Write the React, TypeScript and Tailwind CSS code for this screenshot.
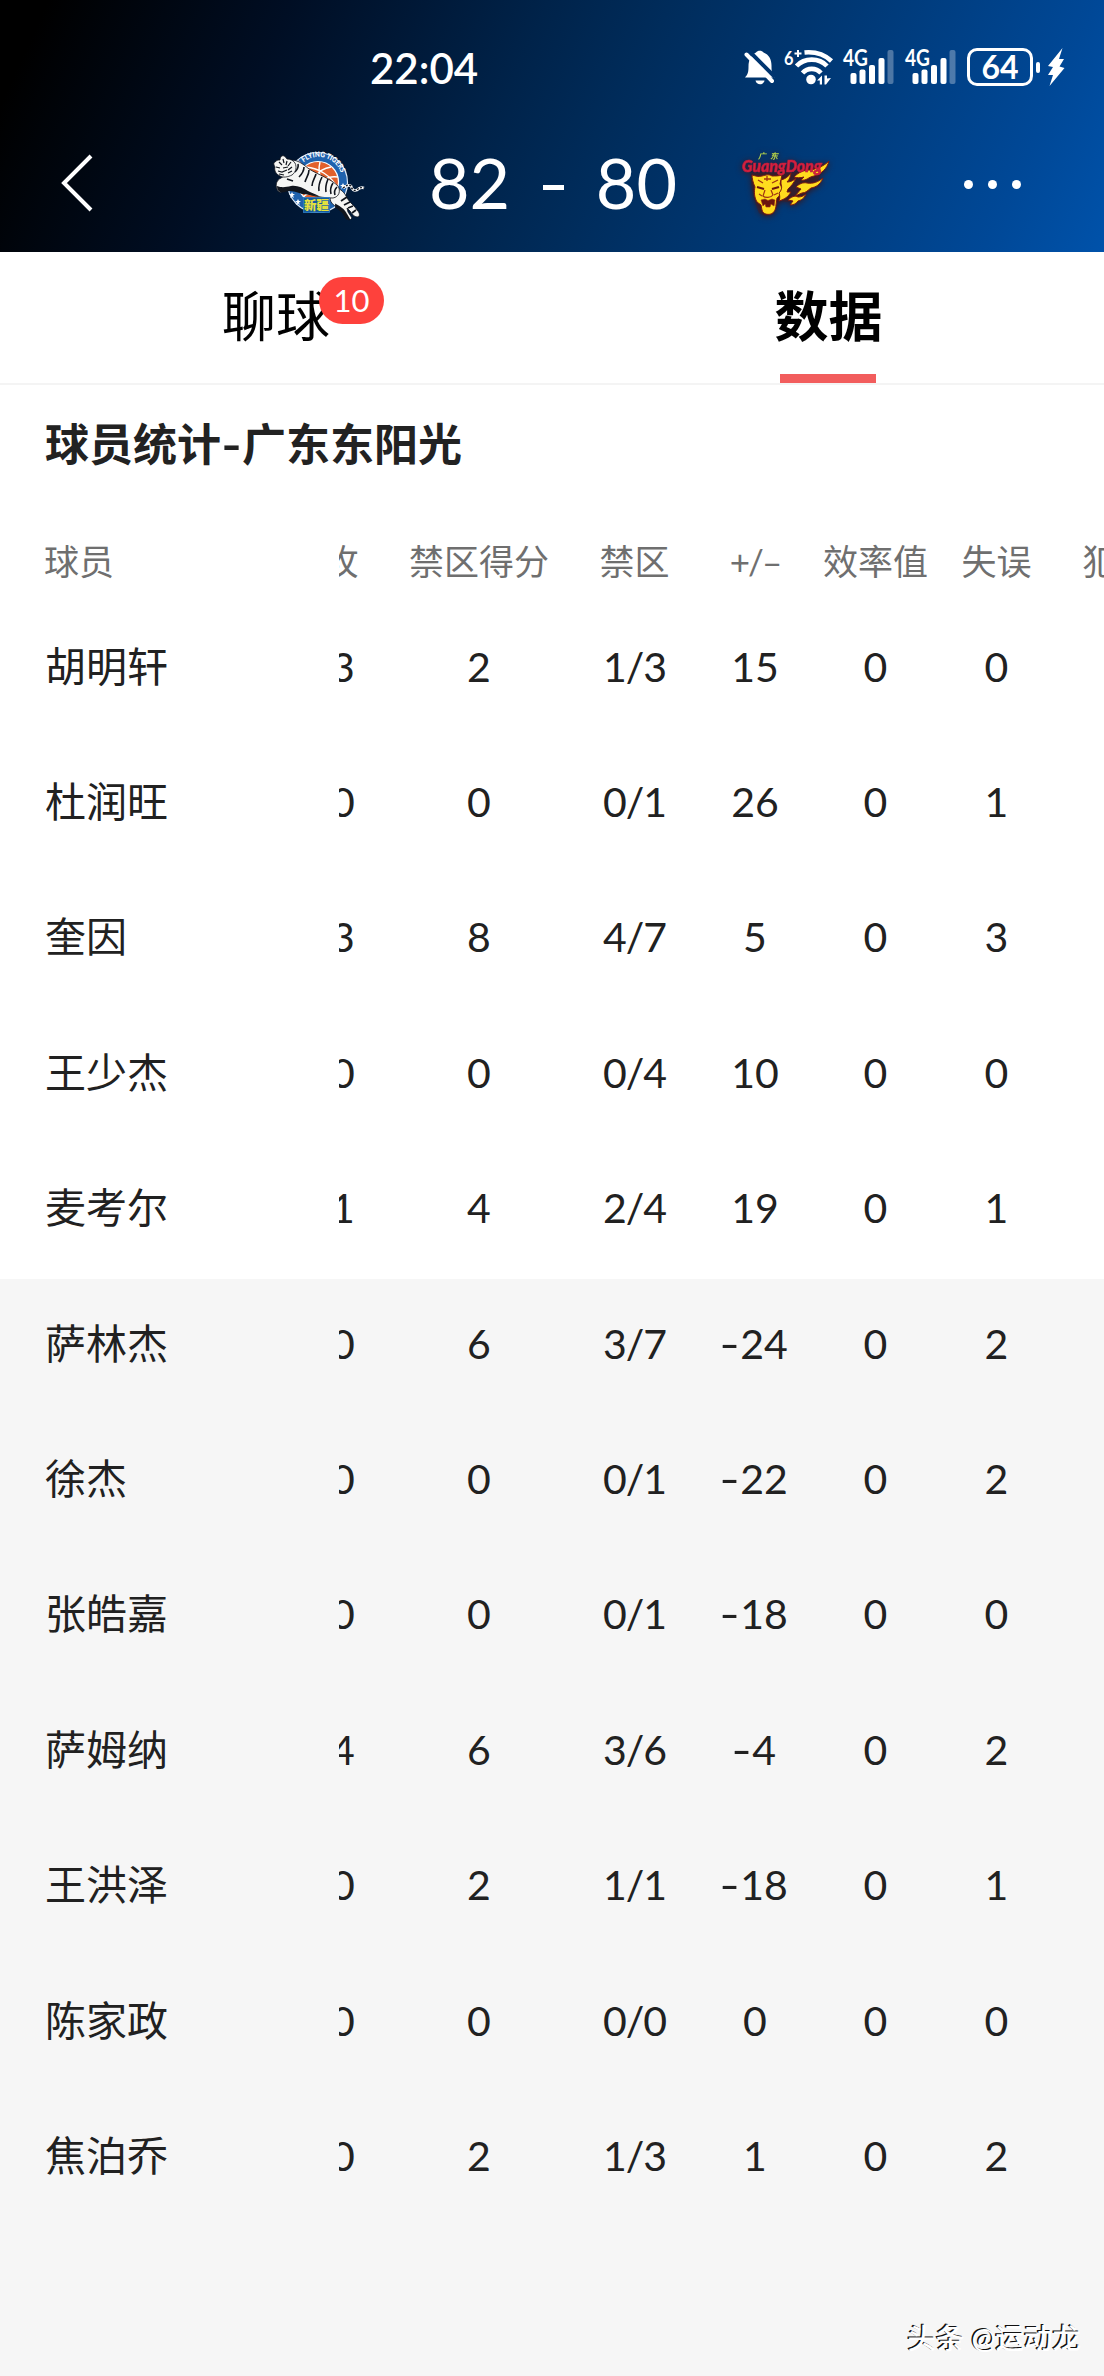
import clsx from "clsx";

const columns = [
  { key: "off", label: "攻", width: "w-[82px]" },
  { key: "paintPts", label: "禁区得分", width: "w-[190px]" },
  { key: "paint", label: "禁区", width: "w-[121px]" },
  { key: "plusMinus", label: "+/–", width: "w-[120px]" },
  { key: "eff", label: "效率值", width: "w-[121px]" },
  { key: "tov", label: "失误", width: "w-[121px]" },
  { key: "foul", label: "犯规", width: "w-[121px]" },
];

const players = [
  { name: "胡明轩", starter: true, stats: ["3", "2", "1/3", "15", "0", "0"] },
  { name: "杜润旺", starter: true, stats: ["0", "0", "0/1", "26", "0", "1"] },
  { name: "奎因", starter: true, stats: ["3", "8", "4/7", "5", "0", "3"] },
  { name: "王少杰", starter: true, stats: ["0", "0", "0/4", "10", "0", "0"] },
  { name: "麦考尔", starter: true, stats: ["1", "4", "2/4", "19", "0", "1"] },
  { name: "萨林杰", starter: false, stats: ["0", "6", "3/7", "-24", "0", "2"] },
  { name: "徐杰", starter: false, stats: ["0", "0", "0/1", "-22", "0", "2"] },
  { name: "张皓嘉", starter: false, stats: ["0", "0", "0/1", "-18", "0", "0"] },
  { name: "萨姆纳", starter: false, stats: ["4", "6", "3/6", "-4", "0", "2"] },
  { name: "王洪泽", starter: false, stats: ["0", "2", "1/1", "-18", "0", "1"] },
  { name: "陈家政", starter: false, stats: ["0", "0", "0/0", "0", "0", "0"] },
  { name: "焦泊乔", starter: false, stats: ["0", "2", "1/3", "1", "0", "2"] },
];

const MutedBell = () => (
  <svg className="w-[31px] h-[35px]" viewBox="0 0 31 35" fill="none">
    <path
      d="M1 27.500c3-3 3.500-6 3.500-11 0-7 3-12 7.500-14 1.500-2.500 6-2.500 7.500 0 5.500 2 8 7 8 13 0 6 .5 9 3 12z"
      fill="#fff"
    />
    <path d="M11.500 30.500h9c-1 5-8 5-9 0z" fill="#fff" />
    <path d="M5 1l26 26" stroke="#003570" strokeWidth="4" />
    <path d="M2.500 4.500l25.500 26.500" stroke="#fff" strokeWidth="4" strokeLinecap="round" />
  </svg>
);

const Wifi = () => (
  <svg className="w-[50px] h-[36px] overflow-visible" viewBox="0 0 50 36" fill="none">
    <text x="0" y="15.500" fontSize="19" fontWeight="700" fill="#fff" textLength="9.500" lengthAdjust="spacingAndGlyphs">
      6
    </text>
    <path d="M10.500 4.500h7M14 1v7" stroke="#fff" strokeWidth="2" />
    <g stroke="#fff" strokeWidth="4.600">
      <path d="M20.500 3.500c11-1 20 2 27 8.500" />
      <path d="M12.500 17c8-8.500 22.500-8.500 30.500 0" />
      <path d="M18.500 24c5-5.500 13.500-5.500 18.500 0" />
    </g>
    <circle cx="27" cy="30.500" r="4.800" fill="#fff" />
    <path d="M33 31.500l5-5v9h-2.200v-4zM47 29l-5 6.500h-1.500v-9h2.500v3z" fill="#fff" />
  </svg>
);

const Signal = () => (
  <svg className="w-[51px] h-[36px] overflow-visible" viewBox="0 0 51 36">
    <text x="0" y="17" fontSize="22" fontWeight="700" fill="#fff" textLength="25" lengthAdjust="spacingAndGlyphs">
      4G
    </text>
    <rect x="7.500" y="24" width="6" height="11" rx="2" fill="#fff" />
    <rect x="16.500" y="20.500" width="6" height="14.500" rx="2" fill="#fff" />
    <rect x="26" y="16" width="6" height="19" rx="2" fill="#fff" />
    <rect x="35.500" y="9" width="6" height="26" rx="2" fill="#fff" />
    <rect x="44.500" y="1" width="6" height="34" rx="2" fill="#fff" opacity="0.3" />
  </svg>
);

const Battery = () => (
  <div className="flex items-center">
    <div className="flex h-[38px] w-[66px] items-center justify-center rounded-[10px] border-[3px] border-white text-[32px] leading-none font-bold">
      64
    </div>
    <div className="ml-[3px] h-[11px] w-[4px] rounded-sm bg-white" />
    <svg className="ml-[7px] h-[38px] w-[18px]" viewBox="0 0 18 38">
      <path d="M15.500 0L1 18l5 1-5 8h5L2.500 38 17.500 20l-5-1.500L17 11h-5z" fill="#fff" />
    </svg>
  </div>
);

const TigersLogo = () => (
  <svg className="w-[94px] h-[72px] overflow-visible" viewBox="0 0 94 72">
    <circle cx="44.500" cy="32.500" r="30" fill="#1f62ae" stroke="#dbe8f6" strokeWidth="1.200" />
    <circle cx="45" cy="32" r="20.500" fill="#e2602c" stroke="#fff" strokeWidth="1.200" />
    <path
      d="M33 17c13 1 25 9 31 20M47 12c-2 7-1 14 3 21M58 17c-6 1-12 4-15 9M65 27c-6-1-10 0-14 3M30 47c4-4 8-5 13-5"
      stroke="#fff"
      strokeWidth="1.400"
      fill="none"
    />
    <defs>
      <path id="ring" d="M25 19A23.500 23.500 0 0 1 67 40" />
    </defs>
    <text fontSize="7.500" fontWeight="900" fill="#fff">
      <textPath href="#ring" textLength="54" lengthAdjust="spacingAndGlyphs">
        XJ FLYING TIGERS
      </textPath>
    </text>
    <path
      d="M70 33l1 2h2l-2 1.500 1 2.500-2-1.500-2 1.500 1-2.500-2-1.500h2zM69 42l1 2h2l-2 1.500 1 2.500-2-1.500-2 1.500 1-2.500-2-1.500h2zM64 50l1 2h2l-2 1.500 1 2.500-2-1.500-2 1.500 1-2.500-2-1.500h2zM19 42l1 2h2l-2 1.500 1 2.500-2-1.500-2 1.500 1-2.500-2-1.500h2zM25 49l1 2h2l-2 1.500 1 2.500-2-1.500-2 1.500 1-2.500-2-1.500h2z"
      fill="#fff"
    />
    {/* hind legs */}
    <path
      d="M62 37c6 2 10 6 12 11 3 5 8 8 10 12 3 3 3 6 1 7-4 0-6-3-8-6l-3-3 1 4 4 6c-2 3-5 2-6-1-2-6-5-8-9-10-4-2-6-4-7-8z"
      fill="#f6f6f4"
      stroke="#10131a"
      strokeWidth="0.800"
    />
    <path
      d="M63 55c4 2 8 5 10 9l3 5c-1 0-3 0-4-3-2-5-6-7-9-9zM74 47l-6 4M77 52l-6 3M80 56l-5 2M83 60l-4 3"
      fill="#11151d"
      stroke="#11151d"
      strokeWidth="1.800"
    />
    {/* body */}
    <path
      d="M20 10c6 1 10 4 16 9 10 6 22 10 29 17 3 5 1 11-5 12-7 0-15-1-21-3-6-2-9-5-13-6-5-2-10 0-14 1-3 3-7 3-8-1-2-5 0-9 4-11 4-3 8-4 12-6z"
      fill="#f6f6f4"
      stroke="#10131a"
      strokeWidth="0.800"
    />
    <path
      d="M25 14c1 4-1 6-3 8M31 17c0 4-2 7-5 10M36 20c0 5-3 8-4 12M43 24c-1 4-4 7-4 12M49 27c-2 4-4 8-3 14M55 29c-2 5-3 8-2 13M60 33c-2 3-3 7-2 11M64 37c-2 2-3 5-2 8M14 29l6 2"
      stroke="#11151d"
      strokeWidth="1.600"
      fill="none"
    />
    <path
      d="M4 36c5 2 9 1 14 0 6-1 12 2 17 5 3 2 8 3 11 5-7 0-12-2-17-2-8-3-13-4-17-2-4 1-8 0-8-6z"
      fill="#11151d"
    />
    {/* head */}
    <path
      d="M7 10c0-3 2-5 4-4 1 0 2 2 3 3 3 0 6 1 8 4 2 4 1 9-3 12-4 2-9 3-12 1-4-2-6-5-5-9-1-2-2-4 0-5 2-2 3-2 5-2z"
      fill="#f6f6f4"
      stroke="#10131a"
      strokeWidth="0.800"
    />
    <path
      d="M6 12l3 3M10 9l1 4M14 11l-1 4M18 12l-3 4M3 17l4 1M10 18l5-1M5 21l4 1 5-2M6 24l5 1M19 17l-4 3M19 21l-4 2"
      stroke="#11151d"
      strokeWidth="1.200"
      fill="none"
    />
    <path d="M70 38c3-2 5-4 8-2 1 4 3 5 6 4 2-2 4-3 7-2" stroke="#fff" strokeWidth="2.600" fill="none" />
    <path
      d="M70 38c3-2 5-4 8-2 1 4 3 5 6 4 2-2 4-3 7-2"
      stroke="#11151d"
      strokeWidth="1.400"
      strokeDasharray="2 1.500"
      fill="none"
    />
    <rect x="30.500" y="47.500" width="26" height="15" fill="#155a9e" stroke="#2f7fc4" strokeWidth="0.800" />
    <text x="43.500" y="59.500" fontSize="12.500" fontWeight="900" fill="#e6e13c" textAnchor="middle">
      新疆
    </text>
  </svg>
);

const GuangdongLogo = () => (
  <svg className="w-[92px] h-[64px] overflow-visible drop-shadow-[0_1px_3px_#3a1418]" viewBox="0 0 92 64">
    <path
      d="M11 22h34l14-1 18-5 7-4-4 12-3 9-10 9-8 8-12 1-6-1-5 6-3 7-8 2-6-3-3-8-3-11-2-10z"
      fill="#4a1a1e"
      opacity="0.450"
    />
    <g fill="#ffdc1e" stroke="#7d1a10" strokeWidth="1">
      <path d="M12 24c4 1 6 2 10 1 4-1 7-2 10 0 3 0 7 0 10-1-1 3-1 6-2 9 2 3 2 6 0 8 0 3-1 5-3 6l-1 7c0 4-2 8-5 9-4 1-8 0-9-4l-1-5-4-3c-3-5-3-11-2-15-2-4-3-9-3-12z" />
      <path d="M41 29c4-1 7-3 10-7-1 4-1 6-4 9 3 0 6-1 9-4-2 5-5 8-8 11l-1 3h4c-3 5-6 7-12 9 1-3 1-5 0-8 3-3 3-6 2-9z" />
      <path d="M54 26c5-5 10-7 16-7 7-1 14-4 19-9-2 8-8 13-15 15-6 1-7 5-13 4l3-3c-4 1-7 1-10 0z" />
      <path d="M56 36c3-3 7-5 11-4 6 1 11-1 16-5-3 7-7 9-12 10-3 2-5 5-9 5l-7 3 6-7z" />
      <path d="M48 49c3-3 7-5 10-3 3 0 6-1 8-3-2 5-5 6-8 7-2 3-5 4-8 4l3-4z" />
    </g>
    <g stroke="#a03412" fill="none">
      <path d="M27 25v5M24 28h7M18 29l5 3M38 29l-6 3" strokeWidth="1.300" />
      <path d="M17 36l7 2M39 36l-7 2" stroke="#6b160e" strokeWidth="2.200" />
      <path d="M25 39l-2 6c2 2 8 2 10-1l-2-5M19 43l3 2M38 42l-4 2" strokeWidth="1.200" />
      <path d="M21 49l4-1 3 1.500 4-1.500 3 1-1 6-3-2-1 3h-4l-1-3-2 2z" fill="#6b160e" strokeWidth="0.600" />
    </g>
    <text
      x="2"
      y="21"
      fontSize="17"
      fontWeight="900"
      fontStyle="italic"
      fill="#d4213f"
      stroke="#c01c3c"
      strokeWidth="0.700"
      textLength="80"
      lengthAdjust="spacingAndGlyphs"
    >
      GuangDong
    </text>
    <text x="18" y="8" fontSize="8" fontWeight="700" fontStyle="italic" fill="#b9d84a" textLength="20">
      广东
    </text>
  </svg>
);

const StatusBar = () => (
  <div className="flex h-[116px] items-start pt-[48px]">
    <span className="ml-[370px] w-[372px] text-[42px] leading-[40px] font-semibold">22:04</span>
    <div className="flex items-center">
      <div className="ml-[2px]">
        <MutedBell />
      </div>
      <div className="ml-[9px]">
        <Wifi />
      </div>
      <div className="ml-[9px]">
        <Signal />
      </div>
      <div className="ml-[11px]">
        <Signal />
      </div>
      <div className="ml-[11px]">
        <Battery />
      </div>
    </div>
  </div>
);

const ScoreBar = () => (
  <div className="flex h-[136px] items-center pb-[3px]">
    <svg className="mt-px ml-[60px] h-[58px] w-[34px]" viewBox="0 0 34 58" fill="none">
      <path d="M31 2L4 29l27 27" stroke="#fff" strokeWidth="4" />
    </svg>
    <div className="mt-[7px] ml-[179px]">
      <TigersLogo />
    </div>
    <div className="ml-[62px] flex w-[248px] items-center justify-between text-[70px] leading-none">
      <span className="-mt-[2px]">82</span>
      <span className="mt-[10px] h-[5px] w-[21px] bg-white" />
      <span className="-mt-[2px]">80</span>
    </div>
    <div className="ml-[63px]">
      <GuangdongLogo />
    </div>
    <div className="mt-[4px] ml-[132px] flex gap-[15px]">
      <i className="size-[9px] rounded-full bg-white" />
      <i className="size-[9px] rounded-full bg-white" />
      <i className="size-[9px] rounded-full bg-white" />
    </div>
  </div>
);

const Tabs = () => (
  <nav className="flex h-[133px] border-b-2 border-[#f4f4f4] bg-white text-[54px] leading-[54px] text-black">
    <div className="flex w-1/2 justify-center pt-[38px]">
      <span className="relative h-[54px]">
        聊球
        <span className="absolute top-[-13px] left-[97px] flex h-[47px] w-[65px] items-center justify-center rounded-full bg-[#fe413c] text-[31px] leading-none text-white">
          10
        </span>
      </span>
    </div>
    <div className="flex w-1/2 flex-col items-center justify-between pt-[38px]">
      <span className="ml-px font-bold">数据</span>
      <span className="h-[9px] w-[96px] bg-[#f25d5d]" />
    </div>
  </nav>
);

const StatsTable = () => (
  <section className="flex grow flex-col">
    <h2 className="flex h-[121px] bg-white pt-[36px] pl-[45px] text-[44px] leading-[46px] font-bold text-[#222]">
      <span>球员统计</span>
      <span className="w-[21px] scale-x-125 text-center">-</span>
      <span>广东东阳光</span>
    </h2>
    <div className="flex h-[96px] items-center bg-white pt-[15px] text-[35px] leading-none text-[#6f6f6f]">
      <div className="w-[339px] shrink-0 pl-[44px]">球员</div>
      <div className="flex grow overflow-hidden py-2">
        <div className="-ml-[37px] flex shrink-0">
          {columns.map((c) => (
            <div
              key={c.key}
              className={clsx(
                "shrink-0 text-center whitespace-nowrap",
                c.width,
                c.key === "plusMinus" && "tracking-[-2px]",
                c.key === "off" && "-translate-x-[2px]"
              )}
            >
              {c.label}
            </div>
          ))}
        </div>
      </div>
    </div>
    {players.map((p) => (
      <div
        key={p.name}
        className={clsx(
          "flex h-[135.4px] shrink-0 items-center pb-[6px] text-[41px] leading-[60px] text-[#212121]",
          p.starter ? "bg-white" : "bg-[#f6f6f6]"
        )}
      >
        <div className="w-[339px] shrink-0 pl-[45px]">{p.name}</div>
        <div className="flex grow overflow-hidden">
          <div className="-ml-[37px] flex shrink-0">
            {p.stats.map((value, i) => (
              <div
                key={i}
                className={clsx("shrink-0 text-center", columns[i].width, value.includes("/") && "tracking-[-1px]")}
              >
                {value.startsWith("-") ? (
                  <>
                    <span className="mr-[3px] inline-block scale-x-135">-</span>
                    {value.slice(1)}
                  </>
                ) : (
                  value
                )}
              </div>
            ))}
          </div>
        </div>
      </div>
    ))}
  </section>
);

export default function App() {
  return (
    <main className="relative flex h-[2376px] w-[1104px] flex-col overflow-hidden bg-[#f6f6f6] font-['Lato','Noto_Sans_CJK_SC',sans-serif]">
      <header className="h-[252px] bg-[linear-gradient(115deg,#000_4%,#000e24_24%,#00234a_45%,#002c5b_55%,#004897_90%,#0052aa_100%)] text-white">
        <StatusBar />
        <ScoreBar />
      </header>
      <Tabs />
      <StatsTable />
      <div className="absolute right-[23px] bottom-[22px] text-[28.5px] leading-[32px] font-medium text-white [text-shadow:-1.5px_-1.5px_0.5px_#111]">
        头条 @运动龙
      </div>
    </main>
  );
}
